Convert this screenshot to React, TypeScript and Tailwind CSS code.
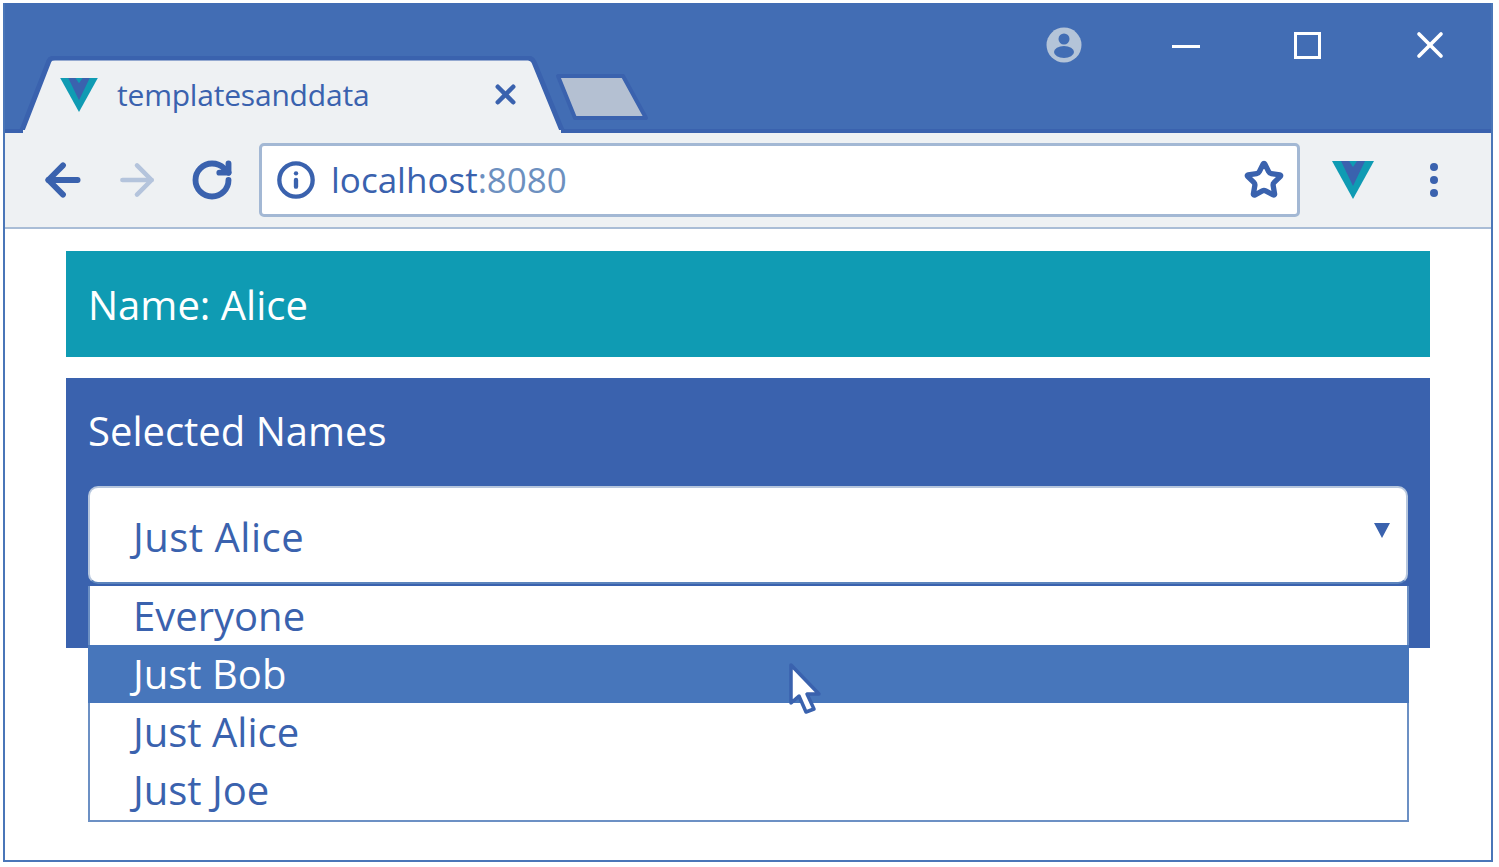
import { ArrowLeft, ArrowRight, Info, RotateCw, Star, X } from "lucide-react";

const options = ["Everyone", "Just Bob", "Just Alice", "Just Joe"];

function VueLogo({ className }: { className: string }) {
  return (
    <svg viewBox="0 0 42 38" className={className}>
      <path d="M0 0h42L21 38z" fill="#0f9bb3" />
      <path d="M9 0h8l4 6 4-6h8L21 25z" fill="#3a62ae" />
    </svg>
  );
}

function Cursor() {
  return (
    <svg viewBox="0 0 34 54" className="absolute left-[700px] top-[17px] h-[54px] w-[34px]">
      <path
        d="M3 3v38l8-7 7 16 8-3-7-15h12z"
        fill="#fff"
        stroke="#3a62ae"
        strokeWidth="3.5"
        strokeLinejoin="round"
      />
    </svg>
  );
}

function Avatar() {
  return (
    <svg viewBox="0 0 36 36" className="h-[36px] w-[36px]">
      <circle cx="18" cy="18" r="17.5" fill="#b4c4d8" />
      <circle cx="18" cy="12" r="5.5" fill="#426db4" />
      <ellipse cx="18" cy="25" rx="10" ry="6" fill="#426db4" />
    </svg>
  );
}

export default function App() {
  return (
    <div className="h-[867px] w-[1499px] overflow-hidden bg-white pl-[3px] pt-[3px] font-['Open_Sans',sans-serif]">
      <div className="flex h-[859px] w-[1490px] flex-col border-2 border-t-0 border-[#4a76b8]">
        {/* title bar */}
        <div className="flex h-[130px] shrink-0 justify-between border-b-[4px] border-[#3a62ae] bg-[#426db4]">
          <div className="flex items-end pl-[13px]">
            <div className="relative -mb-[4px] flex h-[77px] w-[547px] items-center pl-[42px] pr-[44px]">
              <svg viewBox="0 0 547 77" className="absolute inset-0 h-full w-full">
                <path
                  d="M3 77 L31 5 Q32 2 37 2 H510 Q514 2 516 6 L545 77 Z"
                  fill="#eef1f3"
                  stroke="#3a62ae"
                  strokeWidth="5"
                />
                <rect x="5" y="74" width="538" height="3" fill="#eef1f3" />
              </svg>
              <VueLogo className="relative h-[34px] w-[38px]" />
              <span className="relative ml-[19px] flex-1 text-[30px] leading-none tracking-[-0.2px] text-[#3a62ae]">
                templatesanddata
              </span>
              <X className="relative h-[31px] w-[31px] text-[#3a62ae]" strokeWidth={3.5} />
            </div>
            <svg viewBox="0 0 95 48" className="mb-[8px] ml-[-10px] h-[48px] w-[95px]">
              <path d="M3 3 H68 L91 45 H20 Z" fill="#b4c0d2" stroke="#3a62ae" strokeWidth="4" strokeLinejoin="round" />
            </svg>
          </div>
          <div className="flex items-start pr-[39px] pt-[24px]">
            <Avatar />
            <div className="ml-[90px] mt-[18px] h-[3px] w-[28px] bg-white" />
            <div className="ml-[94px] mt-[5px] h-[27px] w-[27px] border-[3px] border-white" />
            <X className="ml-[87px] mt-[-4px] h-[44px] w-[44px] text-white" strokeWidth={2} />
          </div>
        </div>

        {/* toolbar */}
        <div className="flex h-[96px] shrink-0 items-center border-b-2 border-[#a9bdd6] bg-[#eef1f3] pl-[33px]">
          <ArrowLeft className="h-[50px] w-[50px] text-[#3a62ae]" strokeWidth={2.8} />
          <ArrowRight className="ml-[24px] h-[50px] w-[50px] text-[#b4c4dc]" strokeWidth={2.2} />
          <RotateCw className="ml-[28px] h-[44px] w-[44px] text-[#3a62ae]" strokeWidth={3.2} />
          <div className="ml-[25px] flex h-[74px] w-[1041px] items-center rounded-[5px] border-[3px] border-[#a3b8d4] bg-white pl-[14px] pr-[13px]">
            <Info className="h-[40px] w-[40px] text-[#3a62ae]" strokeWidth={2.6} />
            <span className="ml-[15px] flex-1 pb-[2px] text-[35px] leading-none text-[#3a62ae]">
              localhost<span className="text-[#6d90bf]">:8080</span>
            </span>
            <Star className="h-[40px] w-[40px] text-[#3a62ae]" strokeWidth={3.2} />
          </div>
          <VueLogo className="ml-[32px] h-[38px] w-[42px]" />
          <div className="ml-[56px] flex flex-col gap-[5px]">
            <div className="h-[8px] w-[8px] rounded-full bg-[#3a62ae]" />
            <div className="h-[8px] w-[8px] rounded-full bg-[#3a62ae]" />
            <div className="h-[8px] w-[8px] rounded-full bg-[#3a62ae]" />
          </div>
        </div>

        {/* page */}
        <div className="flex flex-col gap-[21px] px-[61px] pt-[22px]">
          <div className="flex h-[106px] items-center bg-[#0f9bb3] pl-[22px] pt-[2px] text-[40px] leading-none text-white">
            Name: Alice
          </div>
          <div className="relative h-[270px] bg-[#3a62ae] px-[22px] pt-[32px]">
            <div className="text-[40px] leading-[42px] text-white">Selected Names</div>
            <div className="mt-[34px] flex h-[98px] items-center justify-between rounded-[10px] border-2 border-[#b6c6dd] border-b-[#5b84bd] bg-white pl-[43px] pr-[16px] pt-[4px] text-[40px] text-[#3a62ae]">
              <span className="leading-none tracking-[0.5px]">Just Alice</span>
              <span className="mb-[14px] h-0 w-0 border-x-[8px] border-t-[15px] border-x-transparent border-t-[#3a62ae]" />
            </div>
            <div className="absolute left-[22px] top-[208px] w-[1321px] border-2 border-t-0 border-[#6c90c4] bg-white pb-[1px] pt-[1px] text-[40px] leading-[58px] text-[#3a62ae]">
              {options.map((o) => (
                <div
                  key={o}
                  className={`relative h-[58px] pl-[43px] ${o === "Just Bob" ? "-mx-[2px] bg-[#4776bb] pl-[45px] text-white" : ""}`}
                >
                  {o}
                  {o === "Just Bob" && <Cursor />}
                </div>
              ))}
            </div>
          </div>
        </div>
      </div>
    </div>
  );
}
